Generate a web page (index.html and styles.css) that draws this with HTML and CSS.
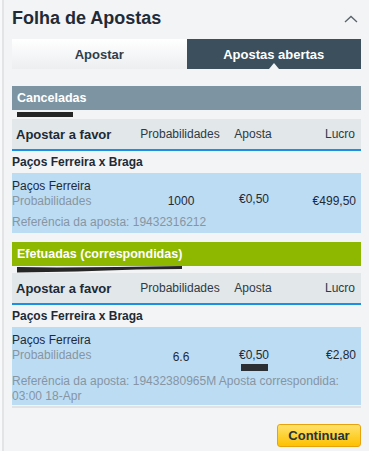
FILE: index.html
```html
<!DOCTYPE html>
<html lang="pt">
<head>
  <meta charset="UTF-8">
  <meta name="viewport" content="width=device-width, initial-scale=1.0">
  <title>Folha de Apostas</title>
  <link rel="stylesheet" href="styles.css">
</head>
<body>
  <div class="betslip">
    <div class="slip-header">
      <h1>Folha de Apostas</h1>
      <svg class="chevron" width="14" height="8" viewBox="0 0 14 8">
        <path d="M1 7 L7 1.5 L13 7" fill="none" stroke="#5a636b" stroke-width="1.3"/>
      </svg>
    </div>

    <div class="tabs">
      <div class="tab">Apostar</div>
      <div class="tab active">Apostas abertas</div>
    </div>

    <!-- Cancelled bets -->
    <div class="section">
      <div class="section-title cancelled">Canceladas</div>
      <div class="redact-strip"><span class="redact"></span></div>
      <div class="col-head">
        <div class="col-side">Apostar a favor</div>
        <div class="col-odds">Probabilidades</div>
        <div class="col-stake">Aposta</div>
        <div class="col-profit">Lucro</div>
      </div>
      <div class="event">Paços Ferreira x Braga</div>
      <div class="bet">
        <div class="runner">Paços Ferreira</div>
        <div class="bet-row">
          <div class="col-side muted">Probabilidades</div>
          <div class="col-odds value">1000</div>
          <div class="col-stake value up">€0,50</div>
          <div class="col-profit value">€499,50</div>
        </div>
        <div class="ref">Referência da aposta: 19432316212</div>
      </div>
    </div>

    <!-- Matched bets -->
    <div class="section matched">
      <div class="section-title placed">Efetuadas (correspondidas)</div>
      <div class="redact-strip">
        <svg class="scribble" width="166" height="7" viewBox="0 0 166 7">
          <polygon points="0,1 40,1.5 100,1 165,0 165,3 120,3.5 60,5.5 0,6.5" fill="#262626"/>
        </svg>
      </div>
      <div class="col-head">
        <div class="col-side">Apostar a favor</div>
        <div class="col-odds">Probabilidades</div>
        <div class="col-stake">Aposta</div>
        <div class="col-profit">Lucro</div>
      </div>
      <div class="event">Paços Ferreira x Braga</div>
      <div class="bet last">
        <div class="runner">Paços Ferreira</div>
        <div class="bet-row">
          <div class="col-side muted">Probabilidades</div>
          <div class="col-odds value down">6.6</div>
          <div class="col-stake value">€0,50<span class="redact small"></span></div>
          <div class="col-profit value">€2,80</div>
        </div>
        <div class="ref">Referência da aposta: 19432380965M Aposta correspondida: 03:00 18-Apr</div>
      </div>
    </div>

    <div class="slip-footer">
      <button class="continue">Continuar</button>
    </div>
  </div>
</body>
</html>
```

FILE: styles.css
```css
body {
  margin: 0;
  background-color: #f8f9fa;
  font-family: 'Liberation Sans', Arial, sans-serif;
  font-size: 12px;
  color: #1e2a35;
}
.betslip {
  margin-left: 2px;
  border-left: 2px solid #e2e4e6;
  background-color: #f3f4f6;
  padding: 0 8px 6px 8px;
  min-height: 445px;
}
.slip-header {
  display: flex;
  justify-content: space-between;
  align-items: center;
  padding: 7px 3px 10px 0;
}
.slip-header h1 {
  margin: 0;
  font-size: 18px;
  line-height: 22px;
  font-weight: bold;
  color: #1f2b37;
}
.chevron {
  display: block;
  margin-top: 2px;
}
.tabs {
  display: flex;
  height: 30px;
}
.tab {
  flex: 1;
  display: flex;
  align-items: center;
  justify-content: center;
  font-size: 13px;
  font-weight: bold;
  color: #2f3e4b;
  background: linear-gradient(#ffffff, #eceef0);
}
.tab.active {
  position: relative;
  background: #3b4f5d;
  color: #ffffff;
}
.tab.active::after {
  content: '';
  position: absolute;
  left: 50%;
  bottom: 0;
  margin-left: -5px;
  border-left: 5px solid transparent;
  border-right: 5px solid transparent;
  border-bottom: 6px solid #f3f4f6;
}
.section {
  margin-top: 17px;
}
.section.matched {
  margin-top: 9px;
  border-bottom: 2px solid #e0e2e4;
  padding-bottom: 1px;
}
.section-title {
  height: 24px;
  line-height: 24px;
  padding-left: 5px;
  font-size: 12.5px;
  font-weight: bold;
  color: #ffffff;
}
.section-title.cancelled {
  background-color: #7d95a3;
}
.section-title.placed {
  background-color: #8eb700;
}
.redact-strip {
  height: 7px;
  padding-left: 5px;
}
.redact {
  display: block;
  width: 56px;
  height: 5px;
  margin-top: 2px;
  background-color: #262626;
}
.redact.small {
  width: 27px;
  height: 7px;
  margin: 1px 0 -3px 19px;
  background-color: #2b2f33;
}
.scribble {
  display: block;
}
.col-head,
.bet-row {
  display: grid;
  grid-template-columns: 1fr 82px 64px 70px;
}
.col-head {
  height: 30px;
  align-items: center;
  padding: 0 6px 0 4px;
  background-color: #e2e7e9;
  border-bottom: 2px solid #1b8fe2;
  color: #2b3a46;
}
.col-head .col-side {
  font-size: 13px;
  font-weight: bold;
  color: #1e2a35;
}
.col-odds,
.col-stake {
  text-align: center;
}
.col-profit {
  text-align: right;
}
.event {
  height: 22px;
  line-height: 22px;
  font-weight: bold;
}
.bet {
  background-color: #bcdcf4;
  padding: 6px 5px 3px 0;
  line-height: 15px;
}
.bet.last {
  padding-bottom: 1px;
}
.bet-row {
  align-items: start;
}
.bet-row .col-side {
  margin-right: -4px;
}
.muted {
  color: #8795a2;
}
.value {
  color: #1e2a35;
}
.value.down {
  position: relative;
  top: 2px;
}
.value.up {
  position: relative;
  top: -2px;
}
.ref {
  margin-top: 6px;
  line-height: 15px;
  color: #8795a2;
  padding-right: 8px;
}
.slip-footer {
  display: flex;
  justify-content: flex-end;
  margin-top: 16px;
}
.continue {
  height: 23px;
  width: 84px;
  padding: 0;
  font-family: 'Liberation Sans', Arial, sans-serif;
  font-size: 13px;
  font-weight: bold;
  color: #25313c;
  background: linear-gradient(#ffe26b, #fcc100);
  border: 1px solid #e8a30c;
  border-radius: 3px;
  cursor: pointer;
}
```
